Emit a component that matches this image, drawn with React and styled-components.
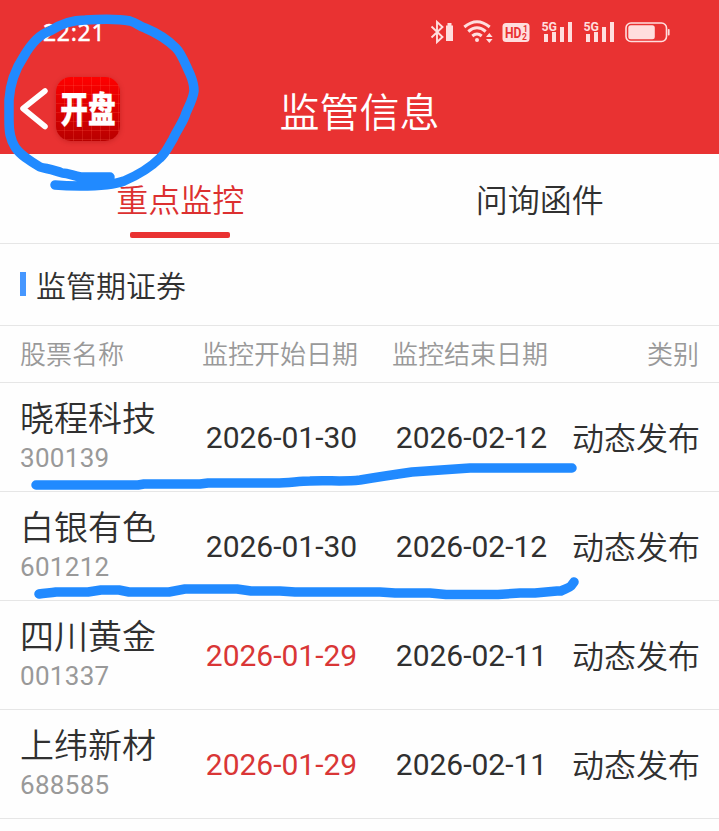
import React from "react";
import styled, { createGlobalStyle } from "styled-components";

const GlobalStyle = createGlobalStyle`
  * {
    box-sizing: border-box;
  }
  body {
    margin: 0;
    background: #fefefe;
    font-family: Roboto, "Noto Sans CJK SC", sans-serif;
    color: #303030;
  }
`;

const Page = styled.div`
  position: relative;
  width: 719px;
  height: 831px;
  overflow: hidden;
  background: #fefefe;
  font-weight: 350;
`;
const Header = styled.header`
  height: 154px;
  background: #e93232;
  color: #fff;
`;
const StatusBar = styled.div`
  display: flex;
  justify-content: space-between;
  align-items: center;
  height: 66px;
  padding: 0 49px 0 43px;
`;
const Clock = styled.span`
  font-family: "Noto Sans", sans-serif;
  font-size: 23px;
  font-weight: 400;
  line-height: 26px;
  padding-bottom: 2px;
  letter-spacing: 0.7px;
  -webkit-text-stroke: 0.4px #fff;
`;
const StatusIcons = styled.svg`
  width: 240px;
  height: 32px;
  font-family: Roboto, sans-serif;
`;
const NavBar = styled.div`
  display: grid;
  grid-template-columns: 1fr auto 1fr;
  align-items: center;
  height: 88px;
  padding: 0 20px;
`;
const BackArea = styled.div`
  display: flex;
  align-items: center;
  gap: 8px;
  padding-bottom: 2px;
`;
const BackIcon = styled.svg`
  width: 28px;
  height: 42px;
`;
const AppBadge = styled.div`
  display: flex;
  justify-content: center;
  align-items: center;
  width: 64px;
  height: 64px;
  padding-top: 4px;
  border-radius: 15px;
  background:
    repeating-linear-gradient(90deg, transparent 0 8px, rgba(255, 100, 80, 0.22) 8px 9px),
    repeating-linear-gradient(180deg, transparent 0 8px, rgba(255, 100, 80, 0.22) 8px 9px),
    linear-gradient(#ff0000, #b80000);
  box-shadow: 0 1px 5px rgba(130, 0, 0, 0.3);
`;
const BadgeText = styled.span`
  font-size: 36px;
  font-weight: 900;
  line-height: 40px;
  white-space: nowrap;
  transform: scaleX(0.77);
  -webkit-text-stroke: 0.3px #fff;
`;
const Title = styled.h1`
  margin: 0;
  padding-top: 8px;
  font-size: 40px;
  font-weight: 350;
  line-height: 48px;
`;
const Tabs = styled.nav`
  display: grid;
  grid-template-columns: 1fr 1fr;
  height: 90px;
  border-bottom: 1px solid #e6e6e6;
`;
const Tab = styled.div`
  display: flex;
  flex-direction: column;
  align-items: center;
  justify-content: space-between;
  padding: 24px 0 5px 1px;
  font-size: 32px;
  line-height: 46px;
  color: ${(props) => (props.$active ? "#dc3030" : "#303030")};
  &::after {
    content: "";
    width: 100px;
    height: 6px;
    border-radius: 2px;
    background: ${(props) => (props.$active ? "#e93232" : "transparent")};
  }
`;
const SectionTitle = styled.div`
  display: flex;
  align-items: center;
  gap: 10px;
  height: 82px;
  padding: 4px 20px 0;
  border-bottom: 1px solid #e6e6e6;
  font-size: 30px;
  line-height: 40px;
`;
const Marker = styled.i`
  width: 6px;
  height: 24px;
  margin-bottom: 6px;
  background: #4697ff;
`;
const Row = styled.div`
  display: grid;
  grid-template-columns: 165px 190px 190px 134px;
  align-items: center;
  height: 109px;
  padding: 0 20px;
  border-bottom: 1px solid #e6e6e6;
`;
const HeadRow = styled(Row)`
  height: 57px;
  padding-top: 2px;
  font-size: 26px;
  line-height: 36px;
  color: #999;
`;
const Cell = styled.div`
  text-align: ${(props) => props.$align || "left"};
  white-space: nowrap;
`;
const StockName = styled.div`
  font-size: 34px;
  line-height: 44px;
`;
const StockCode = styled.div`
  padding-bottom: 1px;
  font-size: 26px;
  font-weight: 400;
  line-height: 35px;
  letter-spacing: 0.3px;
  color: #999;
`;
const DateText = styled.div`
  padding: 2px 0 0 3px;
  font-size: 30px;
  font-weight: 400;
  line-height: 40px;
  text-align: center;
  color: ${(props) => (props.$red ? "#d93636" : "#303030")};
`;
const Category = styled.div`
  padding-top: 3px;
  margin-right: -1px;
  font-size: 32px;
  line-height: 44px;
  text-align: right;
  white-space: nowrap;
`;
const Ink = styled.svg`
  position: absolute;
  top: 0;
  left: 0;
  width: 719px;
  height: 831px;
  pointer-events: none;
`;

const stocks = [
  { name: "晓程科技", code: "300139", start: "2026-01-30", end: "2026-02-12", type: "动态发布" },
  { name: "白银有色", code: "601212", start: "2026-01-30", end: "2026-02-12", type: "动态发布" },
  { name: "四川黄金", code: "001337", start: "2026-01-29", end: "2026-02-11", type: "动态发布", red: true },
  { name: "上纬新材", code: "688585", start: "2026-01-29", end: "2026-02-11", type: "动态发布", red: true },
];

function Signal({ x }) {
  return (
    <g transform={`translate(${x} 20)`} fill="#ffdede">
      <text x="-0.5" y="10.5" fontSize="13.5" fontWeight="700" textLength="15.5" lengthAdjust="spacingAndGlyphs">
        5G
      </text>
      <rect x="2" y="14" width="4" height="8" />
      <rect x="10" y="12" width="4" height="10" />
      <rect x="18" y="7" width="4" height="15" />
      <rect x="26" y="2" width="4" height="20" />
    </g>
  );
}

function Status() {
  return (
    <StatusIcons viewBox="430 17 240 32">
      {/* 블루투스 + 배터리 */}
      <path
        d="M431.5 26.5 L442.5 37 L437 42 V22 L442.5 27 L431.5 37.5"
        fill="none"
        stroke="#ffdede"
        strokeWidth="1.9"
      />
      <path d="M446 25.5 h1.5 v-2.5 h4 v2.5 h1.5 v15.5 h-7 z" fill="#ffdede" />
      {/* 와이파이 */}
      <g fill="none" stroke="#ffdede" strokeWidth="3">
        <path d="M464.3 27 Q477 16.5 489.7 27" />
        <path d="M468.3 31.5 Q477 24 485.7 31.5" />
        <path d="M472.3 36 Q477 32 481.7 36" />
      </g>
      <circle cx="477" cy="40" r="2" fill="#ffdede" />
      <path d="M486 37 l3.3 -4 l3.3 4 z M486 39 l3.3 4 l3.3 -4 z" fill="#ffdede" />
      {/* HD */}
      <rect x="502.5" y="23" width="27" height="19" rx="3.5" fill="#ffdede" />
      <text x="505" y="38" fontSize="15.5" fontWeight="700" fill="#e93232" textLength="16.5" lengthAdjust="spacingAndGlyphs">
        HD
      </text>
      <text x="523" y="31.5" fontSize="8.5" fontWeight="700" fill="#e93232">
        1
      </text>
      <text x="522" y="40" fontSize="8.5" fontWeight="700" fill="#e93232">
        2
      </text>
      <Signal x={542} />
      <Signal x={584} />
      <rect x="626" y="23" width="40.5" height="18.5" rx="5" fill="none" stroke="#ffdede" strokeWidth="1.6" />
      <rect x="628.3" y="25.3" width="26.5" height="14" rx="2.5" fill="#ffdede" />
      <rect x="667.8" y="29" width="1.8" height="6.5" rx="0.8" fill="#ffdede" />
    </StatusIcons>
  );
}

function App() {
  return (
    <Page>
      <GlobalStyle />
      <Header>
        <StatusBar>
          <Clock>22:21</Clock>
          <Status />
        </StatusBar>
        <NavBar>
          <BackArea>
            <BackIcon viewBox="0 0 28 42" fill="none" stroke="#fff" strokeWidth="5.5" strokeLinecap="round" strokeLinejoin="round">
              <path d="M25 3 L3 20.5 L25 38.5" />
            </BackIcon>
            <AppBadge>
              <BadgeText>开盘</BadgeText>
            </AppBadge>
          </BackArea>
          <Title>监管信息</Title>
        </NavBar>
      </Header>
      <Tabs>
        <Tab $active>重点监控</Tab>
        <Tab>问询函件</Tab>
      </Tabs>
      <SectionTitle>
        <Marker />
        监管期证券
      </SectionTitle>
      <HeadRow>
        <Cell>股票名称</Cell>
        <Cell $align="center">监控开始日期</Cell>
        <Cell $align="center">监控结束日期</Cell>
        <Cell $align="right">类别</Cell>
      </HeadRow>
      {stocks.map((stock) => (
        <Row key={stock.code}>
          <Cell>
            <StockName>{stock.name}</StockName>
            <StockCode>{stock.code}</StockCode>
          </Cell>
          <DateText $red={stock.red}>{stock.start}</DateText>
          <DateText>{stock.end}</DateText>
          <Category>{stock.type}</Category>
        </Row>
      ))}
      {/* 손으로 그린 표시 */}
      <Ink viewBox="0 0 719 831" fill="none" stroke="#218aff" strokeWidth="9.5" strokeLinecap="round" strokeLinejoin="round">
        <path d="M110 177 H81 C73 176 69 173 62 173 C55 170 48 169 40 167 C30 161 20 155 15 147 C10 139 9 132 9 121 V100 C10 84 16 68 24 56 C31 44 40 34 50 31 C62 23 72 20 85 20 C101 19 120 19 130 21 C137 23 139 26 145 28 C157 33 168 40 176 48 C182 54 186 66 190 74 C193 81 194 84 194 91 C193 99 189 106 186 113 C184 121 177 130 173 139 C168 147 166 153 160 158 C149 169 138 175 124 181 C111 186 93 186 80 186 Q66 186 55 185" />
        <path d="M36 485 H138 L144 484 H200 L208 483 H275 C290 483 298 481 310 481 C328 480 342 482 360 480 C378 477 391 475 412 472 L470 468 H572" />
        <path d="M39 594 C45 593 50 593 56 592 H88 L101 590 H119 L129 592 H169 L185 589 H237 L251 591 H280 L295 592 H380 L395 593 H430 L446 594.5 H498 L520 593 H535 L557 591 H561 C565 589 569 588 571 586 L574 582" />
      </Ink>
    </Page>
  );
}

export default App;
